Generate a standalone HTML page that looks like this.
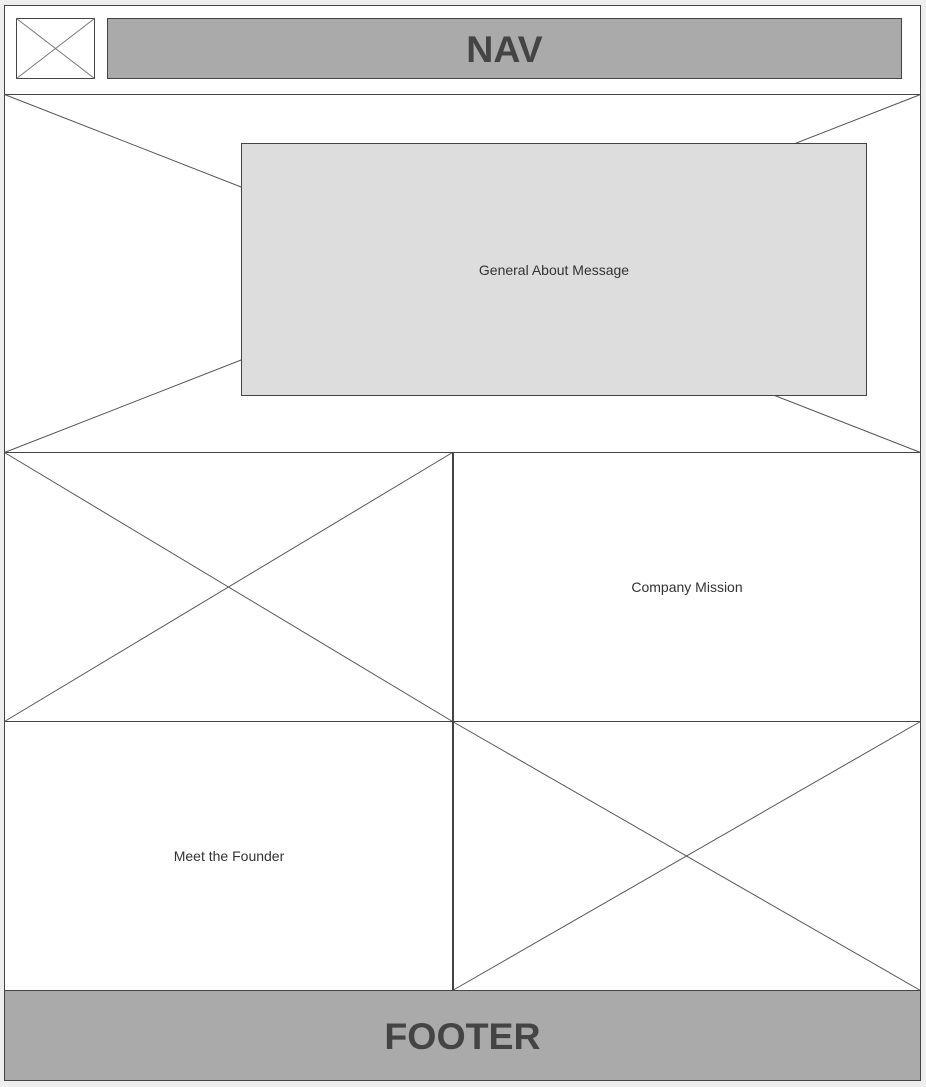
<!DOCTYPE html>
<html><head><style>
html,body{margin:0;padding:0;background:#eeeeee;width:926px;height:1087px;overflow:hidden}
svg{display:block}
text{font-family:"Liberation Sans",sans-serif;fill:#333}
</style></head><body>
<svg width="926" height="1087" viewBox="0 0 926 1087">
<rect x="4.5" y="5.5" width="916" height="1075" fill="#fff" stroke="#444"/>
<rect x="16.5" y="18.5" width="78" height="60" fill="#fff" stroke="#444"/>
<line x1="16.5" y1="18.5" x2="94.5" y2="78.5" stroke="#777"/>
<line x1="94.5" y1="18.5" x2="16.5" y2="78.5" stroke="#777"/>
<rect x="107.5" y="18.5" width="794" height="60" fill="#aaa" stroke="#444"/>
<text x="504.5" y="62" font-size="37.5" font-weight="bold" text-anchor="middle" style="fill:#444">NAV</text>
<line x1="4.5" y1="94.5" x2="920.5" y2="94.5" stroke="#444"/>
<line x1="4.5" y1="94.5" x2="920.5" y2="452.5" stroke="#555"/>
<line x1="920.5" y1="94.5" x2="4.5" y2="452.5" stroke="#555"/>
<rect x="241.5" y="143.5" width="625" height="252" fill="#ddd" stroke="#444"/>
<text x="554" y="275" font-size="14" text-anchor="middle">General About Message</text>
<line x1="4.5" y1="452.5" x2="920.5" y2="452.5" stroke="#444"/>
<line x1="4.5" y1="452.5" x2="452.5" y2="721.5" stroke="#555"/>
<line x1="452.5" y1="452.5" x2="4.5" y2="721.5" stroke="#555"/>
<text x="687" y="592" font-size="14" text-anchor="middle">Company Mission</text>
<line x1="4.5" y1="721.5" x2="920.5" y2="721.5" stroke="#444"/>
<line x1="452.5" y1="721.5" x2="920.5" y2="990.5" stroke="#555"/>
<line x1="920.5" y1="721.5" x2="452.5" y2="990.5" stroke="#555"/>
<text x="229" y="861" font-size="14" text-anchor="middle">Meet the Founder</text>
<line x1="453" y1="452.5" x2="453" y2="990.5" stroke="#444" stroke-width="2"/>
<rect x="4.5" y="990.5" width="916" height="90" fill="#aaa" stroke="#444"/>
<text x="462.5" y="1049" font-size="37.5" font-weight="bold" text-anchor="middle" style="fill:#444">FOOTER</text>
</svg>
</body></html>
